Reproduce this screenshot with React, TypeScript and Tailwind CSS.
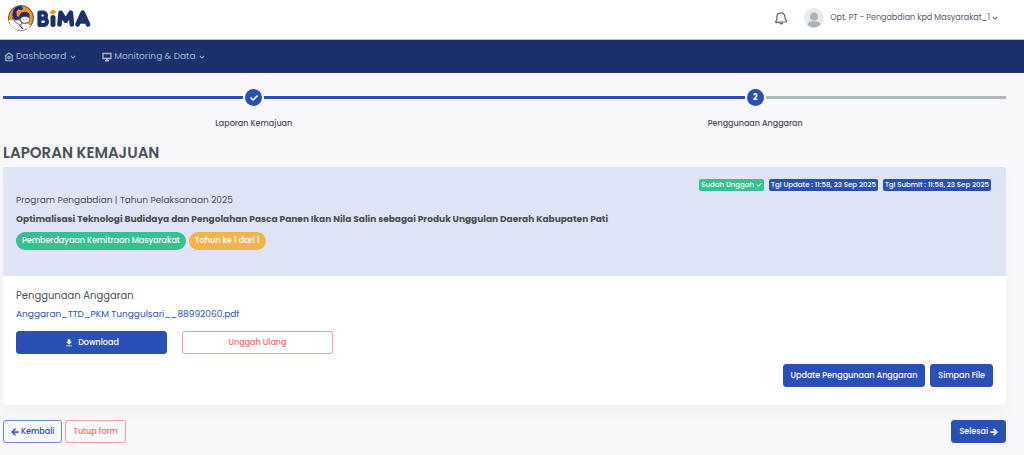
import React from "react";
import { FaArrowLeft, FaArrowRight, FaCheck } from "react-icons/fa";
import { MdFileDownload, MdKeyboardArrowDown } from "react-icons/md";
import clsx from "clsx";

const report = {
    program: "Program Pengabdian | Tahun Pelaksanaan 2025",
    title: "Optimalisasi Teknologi Budidaya dan Pengolahan Pasca Panen Ikan Nila Salin sebagai Produk Unggulan Daerah Kabupaten Pati",
    scheme: "Pemberdayaan Kemitraan Masyarakat",
    year: "Tahun ke 1 dari 1",
    file: "Anggaran_TTD_PKM Tunggulsari__88992060.pdf",
};

const Logo: React.FC = () => (
    <a href="#" aria-label="BIMA" className="flex items-center gap-0.5">
        <svg viewBox="0 0 50 50" className="size-[26px]" aria-hidden="true">
            <circle cx="25" cy="25" r="24" fill="#f7941e" stroke="#1c316c" strokeWidth="1.6" />
            <path d="M2 29c7-1 13 2 18 7l8 5 12 2c-5 4-10 6-16 6C12 48 3 41 2 29z" fill="#fff" />
            <path d="M26 37l12-1 6 4-7 6-12-2z" fill="#fff" />
            <path d="M11 8C15 4 20 2 26 2l3 5-3 3-6-2-4 5 1 8 6 4-3 4-8-2-4-8z" fill="#1c316c" />
            <path d="M24 17c2-4 8-5 13-3 4 2 6 6 4 10l-5-2-6 1-7 3-3-3z" fill="#1c316c" />
            <path d="M25 24l6-2 6 1 4 2c2 4 0 8-4 9l-7 1-6-4z" fill="#fff" stroke="#1c316c" strokeWidth="1.2" />
            <path d="M12 31c3-4 7-4 11-2l4 6-4 4z" fill="#fff" stroke="#1c316c" strokeWidth="1.4" />
            <path d="M8 24l9 5M22 39l7 7M30 28h1M36 28h1" fill="none" stroke="#1c316c" strokeWidth="2" />
        </svg>
        <svg viewBox="0 0 56 20" className="h-5 w-14" aria-hidden="true">
            <g fill="none" stroke="#1c316c" strokeWidth="5" strokeLinejoin="round" strokeLinecap="round">
                <path d="M3.5 4.5v12.5h4.2a3.2 3.2 0 0 0 0-6.5H3.5h3.5a2.9 2.9 0 0 0 0-6z" strokeWidth="4.2" />
                <path d="M17 9.5v7" />
                <path d="M23.5 16.5l1.1-11.8 5.1 8 5.1-8 1.1 11.8" strokeWidth="4.6" />
                <path d="M41.5 16.5l5.2-11.8 5.4 11.8M44.5 13.5h4.6" strokeWidth="4.6" />
            </g>
            <path d="M14 4l2.8-2.5 3.2 1.5-1 2.8-4 .4z" fill="#f7941e" />
        </svg>
    </a>
);

const HomeIcon: React.FC = () => (
    <svg viewBox="0 0 20 20" className="size-2.5" fill="none" stroke="currentColor" strokeWidth="2.4" aria-hidden="true">
        <path d="M2 8l8-6 8 6M3.5 7v10.5h13V7" />
        <circle cx="10" cy="11" r="2.4" />
    </svg>
);

const MonitorIcon: React.FC = () => (
    <svg viewBox="0 0 20 20" className="size-2.5" fill="none" stroke="currentColor" strokeWidth="2.6" aria-hidden="true">
        <path d="M2 3h16v10H2zM6 17.5h8" />
        <path d="M10 13v4" strokeWidth="4" />
    </svg>
);

const Header: React.FC = () => (
    <header className="flex h-10 items-center justify-between border-b border-[#b8bfd2] bg-white pr-6 pb-1 pl-2">
        <Logo />
        <div className="flex items-center">
            <button type="button" aria-label="Notifikasi" className="mr-4 text-[#555b6d]">
                <svg viewBox="0 0 24 24" className="size-[14px]" fill="none" stroke="currentColor" strokeWidth="2" aria-hidden="true">
                    <path d="M11 3.5c4-1 7 1.5 7.5 5l.8 5.5 2.2 3v1.5l-18.5 1V18l2-3.5v-5c0-3 2-5.3 6-6z" strokeLinejoin="round" />
                    <path d="M10 20.5c1 2 4 2 5 0" />
                </svg>
            </button>
            <button type="button" className="flex items-center text-[8px] text-[#555b6d]">
                <svg viewBox="0 0 20 20" className="mr-1.5 size-5" aria-hidden="true">
                    <circle cx="10" cy="10" r="10" fill="#e9eaeb" />
                    <circle cx="10" cy="8.6" r="4" fill="#adb3b8" />
                    <path d="M3.5 17c0-3 3-3.8 6.5-3.8s6.5.8 6.5 3.8a10 10 0 0 1-13 0z" fill="#adb3b8" />
                </svg>
                Opt. PT - Pengabdian kpd Masyarakat_1
                <MdKeyboardArrowDown className="size-2.5" />
            </button>
        </div>
    </header>
);

const NavItem: React.FC<{ icon: React.ReactNode; label: string }> = ({ icon, label }) => (
    <button type="button" className="flex items-center gap-0.5 text-[#a9b4d2]">
        {icon}
        {label}
        <MdKeyboardArrowDown className="size-2.5" />
    </button>
);

const Step: React.FC<{ label: string; marker: React.ReactNode; done?: boolean }> = ({ label, marker, done }) => (
    <li className="flex flex-1 flex-col items-center gap-2">
        <div className="flex w-full items-center gap-0.5">
            <span className="h-[3px] flex-1 bg-[#2b50b5]" />
            <span className="flex size-[17px] items-center justify-center rounded-full bg-[#2b50b5] text-[8px] font-bold text-white">
                {marker}
            </span>
            <span className={clsx("h-[3px] flex-1", done ? "bg-[#2b50b5]" : "bg-[#adb5bd]")} />
        </div>
        <span className="text-[8px] leading-5 font-medium">{label}</span>
    </li>
);

const Tag: React.FC<{ className: string; children: React.ReactNode }> = ({ className, children }) => (
    <span className={clsx("rounded-xs px-0.5 text-[7px] leading-3 font-medium text-white", className)}>{children}</span>
);

const variants = {
    primary: "border-[#2b50b5] bg-[#2b50b5] text-white",
    outline: "border-[#6f88cf] bg-transparent text-[#2b50b5]",
    danger: "border-[#f69a9a] bg-transparent text-[#f46a6a]",
};

const Button: React.FC<{ variant: keyof typeof variants; className?: string; children: React.ReactNode }> = ({
    variant,
    className,
    children,
}) => (
    <button
        type="button"
        className={clsx(
            "flex h-[23px] items-center justify-center gap-0.5 rounded-[3px] border px-[7px] text-[8px] font-medium",
            variants[variant],
            className
        )}
    >
        {children}
    </button>
);

const App: React.FC = () => {
    return (
        <div className="min-h-screen bg-[#f8f8fb] font-['Poppins','Inter',sans-serif] text-[#495057]">
            <Header />
            <nav className="flex h-[33px] items-center gap-6 bg-[#1c316c] pl-1 text-[9px]">
                <NavItem icon={<HomeIcon />} label="Dashboard" />
                <NavItem icon={<MonitorIcon />} label="Monitoring & Data" />
            </nav>

            <main className="pt-4 pr-[18px] pb-3 pl-[3px]">
                <ol className="flex">
                    <Step label="Laporan Kemajuan" marker={<FaCheck className="size-2" />} done />
                    <Step label="Penggunaan Anggaran" marker="2" />
                </ol>

                <h1 className="mt-[9px] mb-1 text-[15px] leading-5 font-semibold">LAPORAN KEMAJUAN</h1>

                <section className="rounded-[3px] bg-white shadow-[0_8px_16px_rgba(18,38,63,0.03)]">
                    <div className="rounded-t-[3px] bg-[#dfe5f6] px-[13px] pt-3 pb-[26px]">
                        <div className="mr-0.5 flex justify-end gap-[5px]">
                            <Tag className="bg-[#34c38f]">Sudah Unggah ✓</Tag>
                            <Tag className="bg-[#2b50b5]">Tgl Update : 11:58, 23 Sep 2025</Tag>
                            <Tag className="bg-[#2b50b5]">Tgl Submit : 11:58, 23 Sep 2025</Tag>
                        </div>
                        <p className="text-[9px] leading-[18px]">{report.program}</p>
                        <h2 className="text-[9px] leading-5 font-bold">{report.title}</h2>
                        <div className="mt-[3px] flex gap-[3px] text-[8px] leading-[18px] font-medium text-white">
                            <span className="rounded-full bg-[#34c38f] px-1.5">{report.scheme}</span>
                            <span className="rounded-full bg-[#f1b44c] px-1.5">{report.year}</span>
                        </div>
                    </div>

                    <div className="px-[13px] pt-[11px] pb-[18px]">
                        <h3 className="text-[10px] leading-[18px]">Penggunaan Anggaran</h3>
                        <a href="#" className="block text-[9px] leading-[18px] text-[#2b50b5]">
                            {report.file}
                        </a>
                        <div className="mt-2 flex gap-[15px]">
                            <Button variant="primary" className="w-[151px]">
                                <MdFileDownload className="mr-0.5 size-2.5" />
                                Download
                            </Button>
                            <Button variant="danger" className="w-[151px]">
                                Unggah Ulang
                            </Button>
                        </div>
                        <div className="mt-2.5 flex justify-end gap-[5px]">
                            <Button variant="primary">Update Penggunaan Anggaran</Button>
                            <Button variant="primary">Simpan File</Button>
                        </div>
                    </div>
                </section>

                <div className="mt-[15px] flex items-center gap-[3px]">
                    <Button variant="outline">
                        <FaArrowLeft className="size-2" stroke="currentColor" strokeWidth="30" />
                        Kembali
                    </Button>
                    <Button variant="danger">Tutup form</Button>
                    <Button variant="primary" className="ml-auto">
                        Selesai
                        <FaArrowRight className="size-2" stroke="currentColor" strokeWidth="30" />
                    </Button>
                </div>
            </main>
        </div>
    );
};

export default App;
